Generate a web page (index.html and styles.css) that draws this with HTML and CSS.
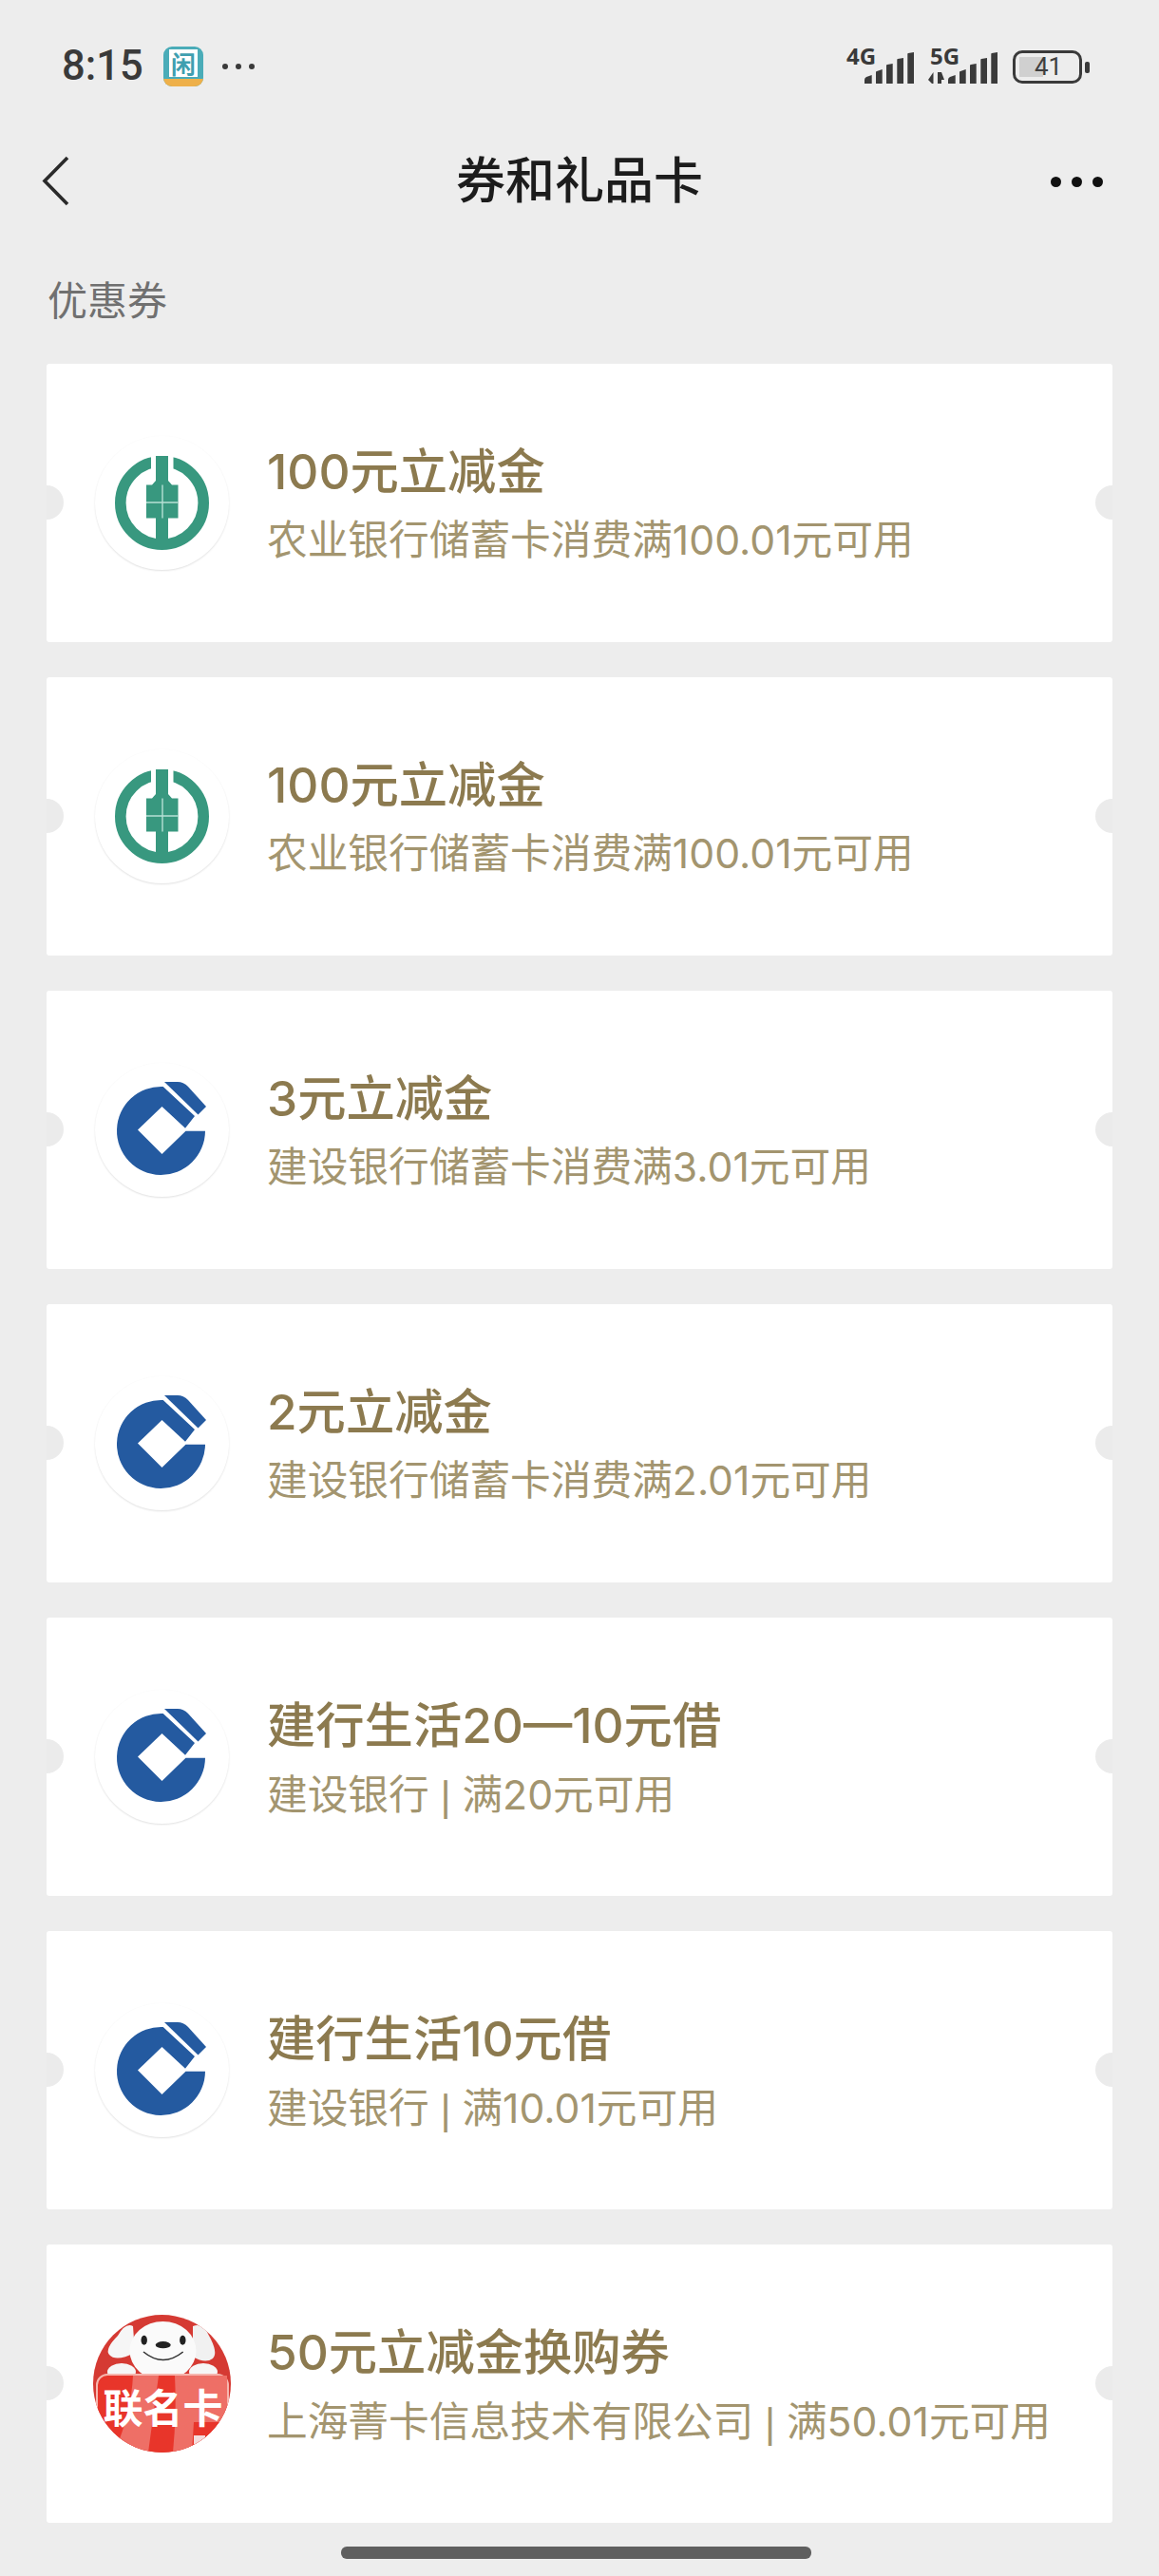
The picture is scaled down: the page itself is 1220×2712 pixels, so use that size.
FILE: index.html
```html
<!DOCTYPE html>
<html lang="zh-CN">
<head>
    <meta charset="UTF-8">
    <meta name="viewport" content="width=device-width, initial-scale=1.0">
    <title>券和礼品卡</title>
    <link rel="stylesheet" href="styles.css">
</head>
<body>
    <svg class="defs">
        <symbol id="logo-abc" viewBox="0 0 141 141">
            <circle cx="70.5" cy="70.5" r="43.7" fill="none" stroke="#38987f" stroke-width="11.6"/>
            <rect x="59" y="15" width="23.5" height="34" fill="#fff"/>
            <path d="M64 21H77V47L81 51.5H87.5V86.5H77V116H64V86.5H54V51.5H60L64 47Z" fill="#38987f"/>
            <path d="M71 51.5V86.5M54 70H87.5" stroke="#b6e0d5" stroke-width="1.4"/>
        </symbol>
        <symbol id="logo-ccb" viewBox="0 0 141 141">
            <path d="M71.7 25A46.5 46.5 0 1 0 116 71.7H95.5L70.5 96L45 70.5L70.5 46L95 68.7L105 56Z" fill="#245aa0"/>
            <path d="M73 20H87Q93 20 98 25L117 46L108.5 54.5Z" fill="#245aa0"/>
        </symbol>
    </svg>

    <div class="status-bar">
        <div class="status-left">
            <span class="time">8:15</span>
            <div class="app-icon"><span class="app-char">闲</span><span class="app-band"></span></div>
            <div class="status-dots"><i></i><i></i><i></i></div>
        </div>
        <svg class="signals" width="175" height="70" viewBox="890 25 175 70">
            <text x="891" y="68" class="net">4G</text>
            <g fill="#3a3a3a">
                <path d="M910 88V84Q910 82 912 81L917.7 79V88Z"/>
                <path d="M922 88V76Q922 75 923 75L928.7 73V88Z"/>
                <path d="M933 88V69Q933 68 934 68L939.7 67V88Z"/>
                <path d="M944.3 88V63Q944.3 62 945 62L951 61V88Z"/>
                <path d="M955.3 88V57Q955.3 56 956 56L962 55V88Z"/>
            </g>
            <text x="979" y="68" class="net">5G</text>
            <g fill="#3a3a3a">
                <path d="M998 88V84Q998 82 1000 81L1005.7 79V88Z"/>
                <path d="M1010 88V76Q1010 75 1011 75L1016.7 73V88Z"/>
                <path d="M1021 88V69Q1021 68 1022 68L1027.7 67V88Z"/>
                <path d="M1032.3 88V63Q1032.3 62 1033 62L1039 61V88Z"/>
                <path d="M1043.3 88V57Q1043.3 56 1044 56L1050 55V88Z"/>
                <path d="M977 84L982.5 76V88H981Z"/>
                <path d="M987 76H991L994 84H991V88H987Z"/>
            </g>
        </svg>
        <div class="battery">
            <div class="battery-body"><span class="battery-level"></span><span class="battery-num">41</span></div>
            <span class="battery-cap"></span>
        </div>
    </div>

    <div class="nav-bar">
        <svg class="back" width="30" height="56" viewBox="0 0 30 56"><path d="M27 3L3 27.5L27 52" fill="none" stroke="#2a2a2a" stroke-width="3.6"/></svg>
        <h1>券和礼品卡</h1>
        <div class="more"><i></i><i></i><i></i></div>
    </div>

    <div class="section-label">优惠券</div>

    <div class="coupon-list">
        <div class="coupon">
            <div class="logo"><div class="ring"><svg width="141" height="141"><use href="#logo-abc"/></svg></div></div>
            <div class="info">
                <div class="name">100元立减金</div>
                <div class="desc">农业银行储蓄卡消费满100.01元可用</div>
            </div>
        </div>
        <div class="coupon">
            <div class="logo"><div class="ring"><svg width="141" height="141"><use href="#logo-abc"/></svg></div></div>
            <div class="info">
                <div class="name">100元立减金</div>
                <div class="desc">农业银行储蓄卡消费满100.01元可用</div>
            </div>
        </div>
        <div class="coupon">
            <div class="logo"><div class="ring"><svg width="141" height="141"><use href="#logo-ccb"/></svg></div></div>
            <div class="info">
                <div class="name">3元立减金</div>
                <div class="desc">建设银行储蓄卡消费满3.01元可用</div>
            </div>
        </div>
        <div class="coupon">
            <div class="logo"><div class="ring"><svg width="141" height="141"><use href="#logo-ccb"/></svg></div></div>
            <div class="info">
                <div class="name">2元立减金</div>
                <div class="desc">建设银行储蓄卡消费满2.01元可用</div>
            </div>
        </div>
        <div class="coupon">
            <div class="logo"><div class="ring"><svg width="141" height="141"><use href="#logo-ccb"/></svg></div></div>
            <div class="info">
                <div class="name">建行生活20—10元借</div>
                <div class="desc">建设银行 <span class="sep">|</span> 满20元可用</div>
            </div>
        </div>
        <div class="coupon">
            <div class="logo"><div class="ring"><svg width="141" height="141"><use href="#logo-ccb"/></svg></div></div>
            <div class="info">
                <div class="name">建行生活10元借</div>
                <div class="desc">建设银行 <span class="sep">|</span> 满10.01元可用</div>
            </div>
        </div>
        <div class="coupon">
            <div class="logo">
                <svg width="145" height="145" viewBox="0 0 145 145">
                    <clipPath id="jd-clip"><circle cx="72.5" cy="72.5" r="72.5"/></clipPath>
                    <g clip-path="url(#jd-clip)">
                        <rect width="145" height="145" fill="#d53a33"/>
                        <path d="M42 12Q34 8 26 22Q12 36 17 42Q24 50 44 40Z" fill="#f6f6f6"/>
                        <path d="M105 12Q116 8 122 22Q132 40 126 46Q118 52 105 44Z" fill="#f1f1f1"/>
                        <ellipse cx="30" cy="60" rx="15" ry="9" fill="#f6f6f6"/>
                        <ellipse cx="116" cy="60" rx="15" ry="9" fill="#f6f6f6"/>
                        <ellipse cx="73.5" cy="38" rx="35" ry="31" fill="#fafafa"/>
                        <ellipse cx="53.7" cy="26.7" rx="3.2" ry="5" fill="#222"/>
                        <ellipse cx="94.3" cy="26.7" rx="3.2" ry="5" fill="#222"/>
                        <ellipse cx="73.7" cy="31.7" rx="8" ry="3.6" fill="#222"/>
                        <path d="M53 39Q73.7 56 94.7 39" fill="none" stroke="#333" stroke-width="1.6"/>
                        <rect x="4" y="63" width="138" height="90" rx="11" fill="#e8352a" stroke="#f6b6ae" stroke-width="2"/>
                        <path d="M42 64H69L58 145H22Q40 105 42 64Z" fill="#ee6f66"/>
                        <path d="M86 64H141V113H108V145H84Q88 105 86 64Z" fill="#ee6f66"/>
                        <path d="M106 113H141V126L116 145H104Z" fill="#e8352a"/>
                        <path d="M106 127L118 127V133L106 145Z" fill="#f4dcdc"/>
                        <text x="73.5" y="114" text-anchor="middle" class="jd-text">联名卡</text>
                    </g>
                </svg>
            </div>
            <div class="info">
                <div class="name">50元立减金换购券</div>
                <div class="desc">上海菁卡信息技术有限公司 <span class="sep">|</span> 满50.01元可用</div>
            </div>
        </div>
    </div>

    <div class="home-bar"></div>
</body>
</html>
```

FILE: styles.css
```css
body {
    margin: 0;
    width: 1220px;
    height: 2712px;
    overflow: hidden;
    background: #ededed;
    font-family: Inter, "Noto Sans CJK SC", sans-serif;
    display: flex;
    flex-direction: column;
}
.defs {
    display: none;
}
.status-bar {
    height: 100px;
    padding: 25px 73px 0 65px;
    box-sizing: border-box;
    display: flex;
    align-items: flex-start;
}
.status-left {
    display: flex;
    align-items: center;
    height: 40px;
    margin-top: 25px;
    flex: 1;
}
.time {
    font-family: Roboto, sans-serif;
    font-size: 43.5px;
    font-weight: 500;
    color: #3a3a3a;
    width: 107px;
    line-height: 40px;
}
.app-icon {
    width: 42px;
    height: 42px;
    border-radius: 9px;
    background: #4aacb8;
    display: flex;
    flex-direction: column;
    align-items: center;
    overflow: hidden;
}
.app-char {
    width: 30px;
    height: 29px;
    margin-top: 3px;
    background: #fff;
    color: #3f9fb0;
    font-family: "Noto Sans CJK SC", sans-serif;
    font-size: 26px;
    font-weight: 700;
    line-height: 29px;
    text-align: center;
}
.app-band {
    width: 100%;
    height: 8px;
    margin-top: 2px;
    background: #eeb04a;
}
.status-dots {
    display: flex;
    gap: 8px;
    margin-left: 20px;
}
.status-dots i {
    width: 6px;
    height: 6px;
    border-radius: 50%;
    background: #3a3a3a;
}
.signals {
    display: block;
}
.net {
    font-family: "Noto Sans", sans-serif;
    font-size: 24px;
    font-weight: 700;
    fill: #3a3a3a;
}
.battery {
    display: flex;
    align-items: center;
    gap: 3px;
    margin-top: 28px;
    margin-left: 1px;
}
.battery-body {
    width: 73px;
    height: 35px;
    box-sizing: border-box;
    border: 3px solid #3a3a3a;
    border-radius: 10px;
    display: flex;
    align-items: center;
    justify-content: center;
    position: relative;
}
.battery-level {
    position: absolute;
    left: 4px;
    top: 4px;
    width: 25px;
    height: 21px;
    background: #d0d0d0;
}
.battery-num {
    position: relative;
    font-family: Roboto, sans-serif;
    font-size: 26px;
    color: #3f3f3f;
    line-height: 29px;
    margin-left: 2px;
}
.battery-cap {
    width: 5px;
    height: 12px;
    border-radius: 2px;
    background: #3a3a3a;
}
.nav-bar {
    height: 176px;
    padding: 6px 59px 0;
    box-sizing: border-box;
    display: grid;
    grid-template-columns: 1fr auto 1fr;
    align-items: center;
}
.back {
    display: block;
    margin-left: -15px;
}
.nav-bar h1 {
    margin: 0;
    font-size: 52px;
    font-weight: 500;
    color: #1c1c1c;
    line-height: 60px;
}
.more {
    display: flex;
    gap: 11px;
    justify-content: flex-end;
}
.more i {
    width: 11px;
    height: 11px;
    border-radius: 50%;
    background: #111;
}
.section-label {
    padding-left: 50px;
    font-size: 42px;
    line-height: 60px;
    margin-top: 11px;
    margin-bottom: 36px;
    color: #707070;
    height: 60px;
}
.coupon-list {
    padding: 0 49px;
    display: flex;
    flex-direction: column;
    gap: 37px;
}
.coupon {
    height: 293px;
    padding-left: 49px;
    box-sizing: border-box;
    background: #fff;
    border-radius: 3px;
    display: flex;
    align-items: center;
    position: relative;
    overflow: hidden;
}
.coupon::before,
.coupon::after {
    content: "";
    position: absolute;
    top: 128px;
    width: 36px;
    height: 36px;
    border-radius: 50%;
    background: #ebebeb;
}
.coupon::before {
    left: -18px;
}
.coupon::after {
    right: -18px;
}
.logo {
    width: 145px;
    height: 145px;
    flex: none;
    display: flex;
    align-items: center;
    justify-content: center;
}
.logo svg {
    display: block;
}
.ring {
    width: 141px;
    height: 141px;
    border-radius: 50%;
    background: #fff;
    box-shadow: 0 1px 2px rgba(0, 0, 0, 0.12);
}
.info {
    margin-left: 38px;
    margin-top: 6px;
}
.name {
    font-size: 51.3px;
    font-weight: 500;
    line-height: 60px;
    color: #8c7a4f;
}
.desc {
    font-size: 42.7px;
    line-height: 60px;
    margin-top: 13px;
    word-spacing: 0;
    color: #a3956f;
}
.sep {
    font-family: "Noto Sans CJK SC", sans-serif;
    font-size: 36px;
    font-weight: 700;
}
.jd-text {
    font-family: "Noto Sans CJK SC", sans-serif;
    font-size: 42px;
    font-weight: 700;
    fill: #fff;
}
.home-bar {
    width: 495px;
    height: 13px;
    margin: 25px 0 0 359px;
    border-radius: 6px;
    background: #5f5f5f;
}
```
